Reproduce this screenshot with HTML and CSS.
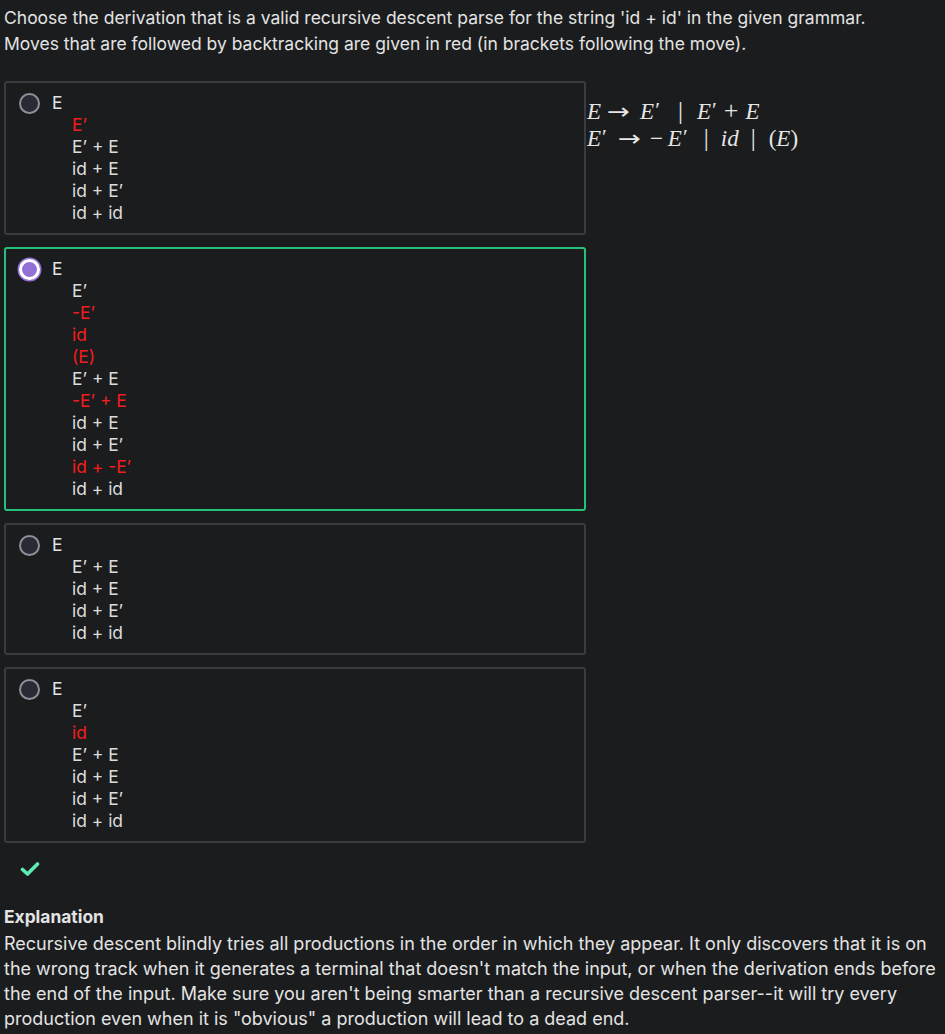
FILE: index.html
```html
<!DOCTYPE html>
<html>
<head>
<meta charset="utf-8">
<link rel="stylesheet" href="styles.css">
</head>
<body>
<div class="page">
  <p class="prompt">Choose the derivation that is a valid recursive descent parse for the string 'id + id' in the given grammar. Moves that are followed by backtracking are given in red (in brackets following the move).</p>
  <div class="main">
    <div class="options">
      <div class="card">
        <div class="head"><span class="radio"></span><span>E</span></div>
        <div class="steps">
          <div class="bad">E’</div>
          <div>E’ + E</div>
          <div>id + E</div>
          <div>id + E’</div>
          <div>id + id</div>
        </div>
      </div>
      <div class="card selected">
        <div class="head"><span class="radio on"></span><span>E</span></div>
        <div class="steps">
          <div>E’</div>
          <div class="bad">-E’</div>
          <div class="bad">id</div>
          <div class="bad">(E)</div>
          <div>E’ + E</div>
          <div class="bad">-E’ + E</div>
          <div>id + E</div>
          <div>id + E’</div>
          <div class="bad">id + -E’</div>
          <div>id + id</div>
        </div>
      </div>
      <div class="card">
        <div class="head"><span class="radio"></span><span>E</span></div>
        <div class="steps">
          <div>E’ + E</div>
          <div>id + E</div>
          <div>id + E’</div>
          <div>id + id</div>
        </div>
      </div>
      <div class="card">
        <div class="head"><span class="radio"></span><span>E</span></div>
        <div class="steps">
          <div>E’</div>
          <div class="bad">id</div>
          <div>E’ + E</div>
          <div>id + E</div>
          <div>id + E’</div>
          <div>id + id</div>
        </div>
      </div>
    </div>
    <div class="grammar">
      <div class="rule"><span class="v">E</span><span class="arrow a1">→</span><span class="v">E<span class="pr">′</span></span><span class="bar b1">|</span><span class="v">E<span class="pr">′</span></span><span class="plus">+</span><span class="v">E</span></div>
      <div class="rule"><span class="v">E<span class="pr">′</span></span><span class="arrow a2">→</span><span class="minus">−</span><span class="v">E<span class="pr">′</span></span><span class="bar b2">|</span><span class="v">id</span><span class="bar b3">|</span><span class="paren">(<span class="v">E</span>)</span></div>
    </div>
  </div>
  <div class="check">
    <svg width="20" height="16" viewBox="0 0 20 16"><path d="M2.5 8.5 L7.5 13 L17.5 3" fill="none" stroke="#5eeab2" stroke-width="3.6" stroke-linecap="round" stroke-linejoin="round"/></svg>
  </div>
  <div class="explanation">
    <h3>Explanation</h3>
    <p>Recursive descent blindly tries all productions in the order in which they appear. It only discovers that it is on the wrong track when it generates a terminal that doesn't match the input, or when the derivation ends before the end of the input. Make sure you aren't being smarter than a recursive descent parser--it will try every production even when it is "obvious" a production will lead to a dead end.</p>
  </div>
</div>
</body>
</html>
```

FILE: styles.css
```css
html, body {
  margin: 0;
  padding: 0;
  background: #1b1c1e;
}
body {
  color: #e3e3e3;
  font-family: Inter, "Liberation Sans", sans-serif;
}
.page {
  padding: 5px 4px 0 4px;
}
.prompt {
  margin: 0;
  font-size: 17.5px;
  line-height: 26px;
  width: 900px;
}
.main {
  display: flex;
  margin-top: 24px;
}
.options {
  width: 582px;
  display: flex;
  flex-direction: column;
  gap: 12px;
}
.card {
  border: 2px solid #3b3c3f;
  border-radius: 3px;
  padding: 9px 12px 9px 13px;
}
.card.selected {
  border-color: #26c27b;
}
.head {
  display: flex;
  align-items: center;
  gap: 12px;
  font-size: 17.4px;
  line-height: 22px;
}
.radio {
  width: 17px;
  height: 17px;
  border-radius: 50%;
  border: 2px solid #8f8f99;
  background: #2a2a36;
  flex: none;
}
.radio.on {
  background: #9370d6;
  border: 3px solid #ffffff;
  box-shadow: 0 0 0 1.5px #9370d6;
  width: 15px;
  height: 15px;
}
.steps {
  padding-left: 53px;
  font-size: 17.4px;
  line-height: 22px;
  color: #dcdcdc;
}
.bad {
  color: #f41c1c;
}
.grammar {
  padding-left: 1px;
  padding-top: 17px;
  font-family: "Liberation Serif", serif;
  font-size: 23px;
  line-height: 26px;
  color: #e6e6e6;
}
.rule {
  display: flex;
  align-items: baseline;
  white-space: nowrap;
}
.v {
  font-style: italic;
}
.pr {
  font-family: "Liberation Serif", serif;
  font-style: normal;
  font-size: 22px;
  margin-left: 1px;
  margin-right: 1px;
  position: relative;
  top: -2px;
}
.arrow {
  font-family: "DejaVu Sans", sans-serif;
  font-size: 22px;
  display: inline-block;
  width: 25px;
  text-align: center;
  transform: scaleX(1.25);
}
.a1 {
  margin: 0 9px 0 5px;
}
.a2 {
  margin: 0 8px 0 9px;
}
.bar {
  font-size: 25px;
}
.b1 {
  margin: 0 14px 0 17px;
}
.b2 {
  margin: 0 12px 0 15px;
}
.b3 {
  margin: 0 13px 0 12px;
}
.plus {
  font-size: 26px;
  margin: 0 7px 0 6px;
}
.minus {
  margin-right: 5px;
}
.check {
  padding: 18px 0 0 16px;
  height: 30px;
}
.explanation h3 {
  margin: 14px 0 0 0;
  font-size: 17.4px;
  font-weight: 700;
  line-height: 24px;
}
.explanation p {
  margin: 2px 0 0 0;
  font-size: 18px;
  line-height: 25px;
}
```
